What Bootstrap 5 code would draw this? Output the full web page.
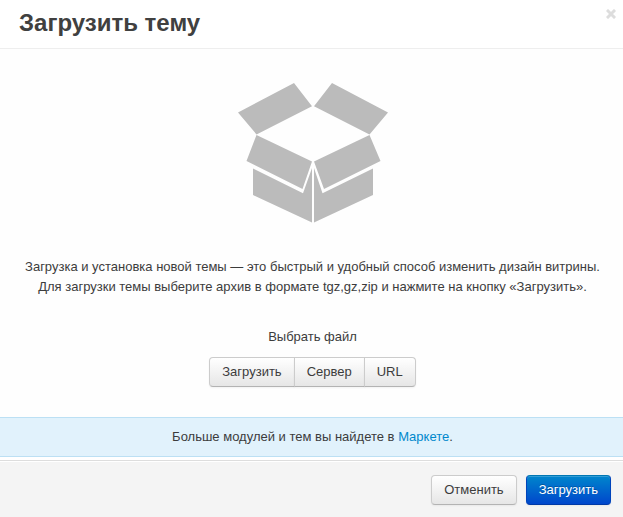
<!DOCTYPE html>
<html lang="ru">
<head>
<meta charset="utf-8">
<meta name="viewport" content="width=device-width, initial-scale=1">
<title>Загрузить тему</title>
<link href="https://cdn.jsdelivr.net/npm/bootstrap@5.3.0/dist/css/bootstrap.min.css" rel="stylesheet">
<style>
  body { font-family: "Liberation Sans", Arial, sans-serif; font-size: 13px; line-height: 20px; color: #3c3c3c; background: #fff; }
  .dialog-head { padding: 3px 5px 5px 19px; border-bottom: 1px solid #eee; }
  .dialog-title { font-size: 24px; line-height: 40px; font-weight: 700; color: #404040; }
  .close-button { width: 14px; height: 14px; margin-top: 4px; line-height: 0; }
  .dialog-body { padding: 33px 15px 30px 17px; background: #fefefe; }
  .box-art { width: 150px; height: 141px; margin-bottom: 34px; }
  .intro { margin-bottom: 30px; }
  .picker-label { margin-bottom: 10px; }
  .btn-soft, .btn-load {
    --bs-btn-font-size: 13px; --bs-btn-line-height: 20px; --bs-btn-padding-y: 4px; --bs-btn-padding-x: 12px; --bs-btn-border-radius: 4px;
    box-shadow: inset 0 1px 0 rgba(255,255,255,.2), 0 1px 2px rgba(0,0,0,.05);
  }
  .btn-soft { --bs-btn-color: #3c3c3c; --bs-btn-hover-color: #333; border-color: #ccc #ccc #b3b3b3; background: linear-gradient(#fff, #e6e6e6); }
  .btn-load { --bs-btn-color: #fff; --bs-btn-hover-color: #fff; border-color: #0077b3 #0044bb #0039a6; background: linear-gradient(#08c, #04c) border-box; text-shadow: 0 -1px 0 rgba(0,0,0,.25); }
  .market { padding: 9px 15px 9px 17px; background: #e1f2fc; border: solid #bce0f4; border-width: 1px 0; margin-bottom: 3px; }
  .market a { color: #08c; }
  .dialog-foot { padding: 14px 12px 12px; gap: 9px; background: #f4f4f4; border-top: 1px solid #ddd; box-shadow: inset 0 1px 0 #fff; }
</style>
</head>
<body>
<main class="d-flex flex-column min-vh-100">
  <header class="dialog-head d-flex justify-content-between align-items-start">
    <h1 class="dialog-title m-0">Загрузить тему</h1>
    <button type="button" class="close-button btn p-0 border-0" aria-label="Закрыть">
      <svg width="10" height="10" viewBox="0 0 10 10" aria-hidden="true"><path d="M2 2l6 6M8 2l-6 6" stroke="#ddd" stroke-width="3" stroke-linecap="square"/></svg>
    </button>
  </header>
  <section class="dialog-body flex-grow-1 text-center">
    <svg class="box-art d-block mx-auto" viewBox="0 0 150 141" fill="#bbb" aria-hidden="true">
      <path d="M0 30.5L56 1l18 23.2-55.5 28.2zM94 1l56 29.5-18.500 21.900L76 24.200z"/>
      <path d="M18.500 53L74 79.500 64.500 107 8.500 79zM131.500 53l11 26-56.500 28-10-27.500z"/>
      <path d="M15 86.500l50 24.700L74 86v54.500L15 113zM76 86l8.500 25.200L135 86.500V113l-59 27.500z"/>
    </svg>
    <p class="intro">Загрузка и установка новой темы — это быстрый и удобный способ изменить дизайн витрины.<br>Для загрузки темы выберите архив в формате tgz,gz,zip и нажмите на кнопку «Загрузить».</p>
    <div class="picker-label" id="source-label">Выбрать файл</div>
    <div class="btn-group" role="group" aria-labelledby="source-label">
      <button type="button" class="btn btn-soft">Загрузить</button>
      <button type="button" class="btn btn-soft">Сервер</button>
      <button type="button" class="btn btn-soft">URL</button>
    </div>
  </section>
  <div class="market text-center">Больше модулей и тем вы найдете в <a href="#" class="text-decoration-none">Маркете</a>.</div>
  <footer class="dialog-foot d-flex justify-content-end">
    <button type="button" class="btn btn-soft">Отменить</button>
    <button type="submit" class="btn btn-load">Загрузить</button>
  </footer>
</main>
<script src="https://cdn.jsdelivr.net/npm/bootstrap@5.3.0/dist/js/bootstrap.bundle.min.js"></script>
</body>
</html>
